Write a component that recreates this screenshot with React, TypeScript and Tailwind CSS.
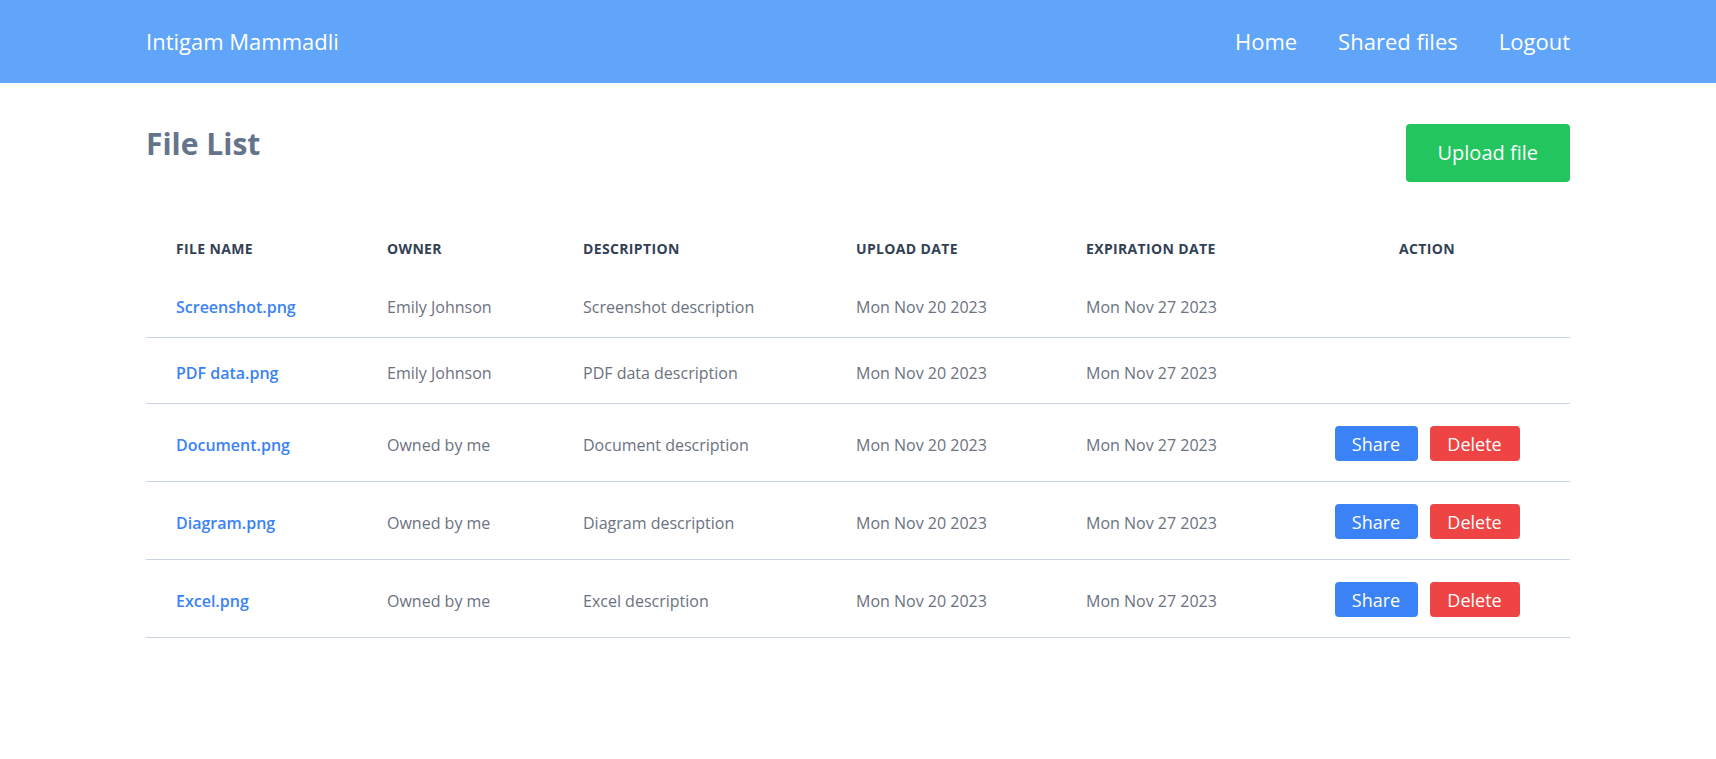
import React from 'react'

type FileRow = {
    name: string
    owner: string
    description: string
    uploaded: string
    expires: string
    mine: boolean
}

const files: FileRow[] = [
    { name: 'Screenshot.png', owner: 'Emily Johnson', description: 'Screenshot description', uploaded: 'Mon Nov 20 2023', expires: 'Mon Nov 27 2023', mine: false },
    { name: 'PDF data.png', owner: 'Emily Johnson', description: 'PDF data description', uploaded: 'Mon Nov 20 2023', expires: 'Mon Nov 27 2023', mine: false },
    { name: 'Document.png', owner: 'Owned by me', description: 'Document description', uploaded: 'Mon Nov 20 2023', expires: 'Mon Nov 27 2023', mine: true },
    { name: 'Diagram.png', owner: 'Owned by me', description: 'Diagram description', uploaded: 'Mon Nov 20 2023', expires: 'Mon Nov 27 2023', mine: true },
    { name: 'Excel.png', owner: 'Owned by me', description: 'Excel description', uploaded: 'Mon Nov 20 2023', expires: 'Mon Nov 27 2023', mine: true },
]

function Navbar() {
    return (
        <nav className="bg-[#60a5fa] text-white">
            <div className="max-w-[1424px] mx-auto h-[83px] flex items-center justify-between text-[22px]">
                <a href="#" className="cursor-pointer">Intigam Mammadli</a>
                <div className="flex items-center gap-[41px]">
                    <a href="#" className="cursor-pointer">Home</a>
                    <a href="#" className="cursor-pointer">Shared files</a>
                    <a href="#" className="cursor-pointer">Logout</a>
                </div>
            </div>
        </nav>
    )
}

export default function App() {
    return (
        <div className="min-h-screen bg-white font-['Open_Sans',sans-serif]">
            <Navbar />

            <main className="max-w-[1424px] mx-auto pt-[41px]">
                <div className="flex items-start justify-between">
                    <h1 className="pt-0.5 text-3xl font-bold text-[#64748b]">File List</h1>
                    <button className="h-[58px] px-8 rounded bg-[#22c55e] text-white text-xl">
                        Upload file
                    </button>
                </div>

                <table className="w-full table-fixed mt-[42px] border-collapse">
                    <colgroup>
                        <col className="w-[211px]" />
                        <col className="w-[196px]" />
                        <col className="w-[273px]" />
                        <col className="w-[230px]" />
                        <col className="w-[228px]" />
                        <col className="w-[286px]" />
                    </colgroup>
                    <thead>
                        <tr className="text-sm font-bold uppercase text-[#334155] tracking-wide">
                            <th className="px-[30px] pt-[15px] pb-[13px] leading-5 text-left">File name</th>
                            <th className="px-[30px] pt-[15px] pb-[13px] leading-5 text-left">Owner</th>
                            <th className="px-[30px] pt-[15px] pb-[13px] leading-5 text-left">Description</th>
                            <th className="px-[30px] pt-[15px] pb-[13px] leading-5 text-left">Upload date</th>
                            <th className="px-[30px] pt-[15px] pb-[13px] leading-5 text-left">Expiration date</th>
                            <th className="px-[30px] pt-[15px] pb-[13px] leading-5 text-center">Action</th>
                        </tr>
                    </thead>
                    <tbody>
                        {files.map((f) => (
                            <tr key={f.name} className="border-b border-[#cbd5e1] text-base leading-[23px] text-[#6b7280]">
                                <td className="px-[30px] pt-[24px] pb-[18px] font-semibold text-[#3b82f6]">
                                    <a href="#">{f.name}</a>
                                </td>
                                <td className="px-[30px] pt-[24px] pb-[18px]">{f.owner}</td>
                                <td className="px-[30px] pt-[24px] pb-[18px]">{f.description}</td>
                                <td className="px-[30px] pt-[24px] pb-[18px]">{f.uploaded}</td>
                                <td className="px-[30px] pt-[24px] pb-[18px]">{f.expires}</td>
                                <td className="px-[30px] pt-[22px] pb-[20px]">
                                    {f.mine ? (
                                        <div className="flex items-center justify-center gap-3">
                                            <button className="h-[35px] w-[83px] rounded bg-[#3b82f6] text-white text-lg">Share</button>
                                            <button className="h-[35px] w-[90px] rounded bg-[#ef4444] text-white text-lg">Delete</button>
                                        </div>
                                    ) : null}
                                </td>
                            </tr>
                        ))}
                    </tbody>
                </table>
            </main>
        </div>
    )
}
